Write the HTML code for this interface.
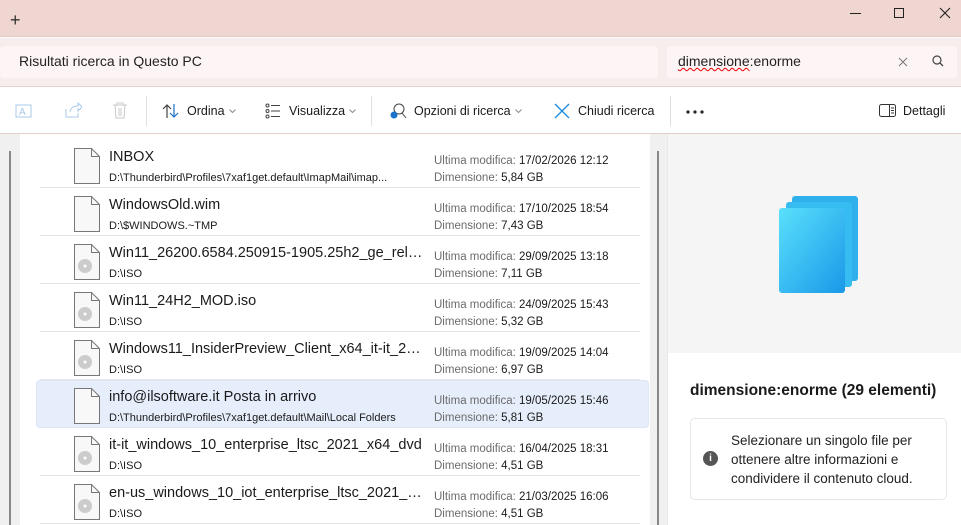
<!DOCTYPE html><html><head><meta charset="utf-8"><style>
*{margin:0;padding:0;box-sizing:border-box}
body{width:961px;height:525px;overflow:hidden;background:#fff;font-family:"Segoe UI","Liberation Sans",sans-serif;color:#1a1a1a;position:relative}
.a{position:absolute}
.row{position:absolute;left:40px;width:600px;height:48px;border-bottom:1px solid #e5e5e5}
.row .n{position:absolute;left:69px;top:9px;font-size:14.5px;white-space:nowrap;width:314px;overflow:hidden;text-overflow:ellipsis}
.row .p{position:absolute;left:69px;top:32px;font-size:11px;white-space:nowrap;width:314px;overflow:hidden;text-overflow:ellipsis}
.row .l1,.row .l2{position:absolute;left:394px;font-size:11.5px;color:#6b6b6b;white-space:nowrap}
.row .l1{top:15px}.row .l2{top:32px}
.row .l1 b,.row .l2 b{font-weight:normal;color:#1a1a1a}
.row svg{position:absolute;left:34px;top:8px}
.tb{position:absolute;top:104px;font-size:12.5px}
.ch{display:inline-block;margin-left:4px;vertical-align:middle}
</style></head><body>
<div class="a" style="left:0;top:0;width:961px;height:37px;background:#f0d6d0;border-bottom:1px solid #e4c8c2"></div>
<div class="a" style="left:10px;top:10px;font-size:18px;color:#333">+</div>
<div class="a" style="left:850px;top:13px;width:11px;height:1px;background:#222"></div>
<div class="a" style="left:894px;top:8px;width:10px;height:10px;border:1px solid #222"></div>
<svg class="a" style="left:939px;top:7px" width="12" height="12"><path d="M1 1l10 10M11 1L1 11" stroke="#222" stroke-width="1.1"/></svg>
<div class="a" style="left:0;top:38px;width:961px;height:49px;background:#f7eded;border-bottom:1px solid #e6d2cd"></div>
<div class="a" style="left:0;top:46px;width:658px;height:32px;background:#fdf5f5;border-radius:4px"></div>
<div class="a" style="left:19px;top:53px;font-size:14px;color:#222">Risultati ricerca in Questo PC</div>
<div class="a" style="left:667px;top:46px;width:290px;height:32px;background:#fdf5f5;border-radius:4px"></div>
<div class="a" style="left:678px;top:53px;font-size:14px;color:#222"><span style="text-decoration:underline wavy #e00;text-decoration-thickness:1px">dimensione</span>:enorme</div>
<svg class="a" style="left:898px;top:57px" width="10" height="10"><path d="M1 1l8 8M9 1L1 9" stroke="#777" stroke-width="1"/></svg>
<svg class="a" style="left:932px;top:55px" width="12" height="12"><circle cx="5" cy="5" r="4" fill="none" stroke="#444" stroke-width="1.2"/><path d="M8 8l3 3" stroke="#444" stroke-width="1.3"/></svg>
<!-- toolbar -->
<svg class="a" style="left:15px;top:101px" width="20" height="20"><rect x="1" y="4" width="15" height="12" fill="none" stroke="#a8c8e8"/><text x="4" y="14" font-size="10" fill="#a8c8e8" font-family="Liberation Sans">A</text></svg>
<svg class="a" style="left:64px;top:101px" width="18" height="18"><path d="M2 8v8h12v-4M6 11c1-5 4-6 8-6V2l4 4-4 4V7" fill="none" stroke="#a8c8e8"/></svg>
<svg class="a" style="left:112px;top:101px" width="16" height="18"><path d="M1 4h14M5 4V2h6v2M3 4l1 13h8l1-13M7 7v8M9 7v8" fill="none" stroke="#c8c8c8"/></svg>
<div class="a" style="left:146px;top:96px;width:1px;height:30px;background:#e0e0e0"></div>
<svg class="a" style="left:162px;top:103px" width="18" height="16"><path d="M5 15V2M1 6l4-4 4 4" fill="none" stroke="#444" stroke-width="1.2"/><path d="M12 1v13M8 10l4 4 4-4" fill="none" stroke="#1a73c8" stroke-width="1.2"/></svg>
<div class="tb" style="left:187px">Ordina<svg class="ch" width="7" height="5"><path d="M0.5 0.5l3 3 3-3" fill="none" stroke="#888"/></svg></div>
<svg class="a" style="left:265px;top:103px" width="16" height="16"><g fill="none" stroke="#444"><circle cx="2.5" cy="2.5" r="1.5"/><circle cx="2.5" cy="8" r="1.5"/><circle cx="2.5" cy="13.5" r="1.5"/><path d="M6 2.5h9M6 8h9M6 13.5h9"/></g></svg>
<div class="tb" style="left:289px">Visualizza<svg class="ch" width="7" height="5"><path d="M0.5 0.5l3 3 3-3" fill="none" stroke="#888"/></svg></div>
<div class="a" style="left:371px;top:96px;width:1px;height:30px;background:#e0e0e0"></div>
<svg class="a" style="left:389px;top:102px" width="18" height="18"><circle cx="10" cy="7" r="5" fill="none" stroke="#444"/><path d="M13 11l4 5" stroke="#444"/><circle cx="5" cy="13" r="3.5" fill="#1a73c8"/></svg>
<div class="tb" style="left:414px">Opzioni di ricerca<svg class="ch" width="7" height="5"><path d="M0.5 0.5l3 3 3-3" fill="none" stroke="#888"/></svg></div>
<svg class="a" style="left:554px;top:103px" width="16" height="16"><path d="M1 1l14 14M15 1L1 15" stroke="#1a8ae0" stroke-width="1.3"/></svg>
<div class="tb" style="left:578px">Chiudi ricerca</div>
<div class="a" style="left:670px;top:96px;width:1px;height:30px;background:#e0e0e0"></div>
<svg class="a" style="left:686px;top:110px" width="20" height="4"><circle cx="2" cy="2" r="1.6" fill="#222"/><circle cx="9" cy="2" r="1.6" fill="#222"/><circle cx="16" cy="2" r="1.6" fill="#222"/></svg>
<svg class="a" style="left:879px;top:104px" width="17" height="13"><rect x="0.5" y="0.5" width="16" height="12" rx="2" fill="none" stroke="#333"/><path d="M10.5 1v11M12 4h3M12 6.5h3M12 9h3" stroke="#333"/></svg>
<div class="tb" style="left:903px">Dettagli</div>
<div class="a" style="left:0;top:133px;width:961px;height:1px;background:#e4d0cb"></div>
<!-- list -->
<div class="a" style="left:0;top:134px;width:20px;height:391px;background:#f0f0f0"></div>
<div class="a" style="left:9px;top:151px;width:2px;height:374px;background:#888"></div>
<div class="a" style="left:650px;top:134px;width:17px;height:391px;background:#f0f0f0"></div>
<div class="a" style="left:657px;top:151px;width:2px;height:374px;background:#888"></div>
<div class="a" style="left:667px;top:134px;width:1px;height:391px;background:#e8e8e8"></div>
<!-- right panel -->
<div class="a" style="left:668px;top:134px;width:293px;height:219px;background:#f5f5f5"></div>
<svg class="a" style="left:778px;top:194px" width="82" height="100"><defs><linearGradient id="g" x1="0" y1="0" x2="1" y2="1"><stop offset="0" stop-color="#5ae0fc"/><stop offset="1" stop-color="#1a98e8"/></linearGradient></defs><rect x="14" y="2" width="66" height="85" rx="3" fill="#2fb0ec"/><rect x="8" y="8" width="66" height="85" rx="3" fill="#36bcf0"/><rect x="1" y="14" width="66" height="85" rx="3" fill="url(#g)"/></svg>
<div class="a" style="left:690px;top:382px;font-size:15.5px;font-weight:bold;color:#1a1a1a">dimensione:enorme (29 elementi)</div>
<div class="a" style="left:690px;top:418px;width:257px;height:82px;border:1px solid #e6e6e6;border-radius:5px"></div>
<div class="a" style="left:703px;top:451px;width:15px;height:15px;border-radius:50%;background:#555;color:#fff;font-size:10px;text-align:center;line-height:15px;font-weight:bold">i</div>
<div class="a" style="left:731px;top:431px;font-size:13.5px;line-height:19px;color:#222">Selezionare un singolo file per<br>ottenere altre informazioni e<br>condividere il contenuto cloud.</div>
<div style="position:absolute;left:0;top:0">
<div class="row" style="top:140px"><svg width="26" height="36"><path d="M0.5 0.5h17l8 8v27h-25z" fill="#f8f8f8" stroke="#777"/><path d="M17.5 0.5v8h8" fill="none" stroke="#777"/></svg><div class="n">INBOX</div><div class="p">D:\Thunderbird\Profiles\7xaf1get.default\ImapMail\imap...</div><div class="l1">Ultima modifica: <b>17/02/2026 12:12</b></div><div class="l2">Dimensione: <b>5,84 GB</b></div></div>
<div class="row" style="top:188px"><svg width="26" height="36"><path d="M0.5 0.5h17l8 8v27h-25z" fill="#f8f8f8" stroke="#777"/><path d="M17.5 0.5v8h8" fill="none" stroke="#777"/></svg><div class="n">WindowsOld.wim</div><div class="p">D:\$WINDOWS.~TMP</div><div class="l1">Ultima modifica: <b>17/10/2025 18:54</b></div><div class="l2">Dimensione: <b>7,43 GB</b></div></div>
<div class="row" style="top:236px"><svg width="26" height="36"><path d="M0.5 0.5h17l8 8v27h-25z" fill="#f8f8f8" stroke="#777"/><path d="M17.5 0.5v8h8" fill="none" stroke="#777"/><circle cx="11" cy="22" r="7" fill="#ccc"/><circle cx="11" cy="22" r="1.5" fill="#fff"/></svg><div class="n">Win11_26200.6584.250915-1905.25h2_ge_release</div><div class="p">D:\ISO</div><div class="l1">Ultima modifica: <b>29/09/2025 13:18</b></div><div class="l2">Dimensione: <b>7,11 GB</b></div></div>
<div class="row" style="top:284px"><svg width="26" height="36"><path d="M0.5 0.5h17l8 8v27h-25z" fill="#f8f8f8" stroke="#777"/><path d="M17.5 0.5v8h8" fill="none" stroke="#777"/><circle cx="11" cy="22" r="7" fill="#ccc"/><circle cx="11" cy="22" r="1.5" fill="#fff"/></svg><div class="n">Win11_24H2_MOD.iso</div><div class="p">D:\ISO</div><div class="l1">Ultima modifica: <b>24/09/2025 15:43</b></div><div class="l2">Dimensione: <b>5,32 GB</b></div></div>
<div class="row" style="top:332px"><svg width="26" height="36"><path d="M0.5 0.5h17l8 8v27h-25z" fill="#f8f8f8" stroke="#777"/><path d="M17.5 0.5v8h8" fill="none" stroke="#777"/><circle cx="11" cy="22" r="7" fill="#ccc"/><circle cx="11" cy="22" r="1.5" fill="#fff"/></svg><div class="n">Windows11_InsiderPreview_Client_x64_it-it_26100</div><div class="p">D:\ISO</div><div class="l1">Ultima modifica: <b>19/09/2025 14:04</b></div><div class="l2">Dimensione: <b>6,97 GB</b></div></div>
<div class="row" style="top:380px;left:36px;width:613px;background:#e6eefb;border:1px solid #dbe6f6;border-radius:4px"><svg width="26" height="36" style="left:37px;top:7px"><path d="M0.5 0.5h17l8 8v27h-25z" fill="#f8f8f8" stroke="#777"/><path d="M17.5 0.5v8h8" fill="none" stroke="#777"/></svg><div class="n" style="left:72px;top:8px">info@ilsoftware.it Posta in arrivo</div><div class="p" style="left:72px;top:31px">D:\Thunderbird\Profiles\7xaf1get.default\Mail\Local Folders</div><div class="l1" style="left:397px;top:14px">Ultima modifica: <b>19/05/2025 15:46</b></div><div class="l2" style="left:397px;top:31px">Dimensione: <b>5,81 GB</b></div></div>
<div class="row" style="top:428px"><svg width="26" height="36"><path d="M0.5 0.5h17l8 8v27h-25z" fill="#f8f8f8" stroke="#777"/><path d="M17.5 0.5v8h8" fill="none" stroke="#777"/><circle cx="11" cy="22" r="7" fill="#ccc"/><circle cx="11" cy="22" r="1.5" fill="#fff"/></svg><div class="n">it-it_windows_10_enterprise_ltsc_2021_x64_dvd</div><div class="p">D:\ISO</div><div class="l1">Ultima modifica: <b>16/04/2025 18:31</b></div><div class="l2">Dimensione: <b>4,51 GB</b></div></div>
<div class="row" style="top:476px"><svg width="26" height="36"><path d="M0.5 0.5h17l8 8v27h-25z" fill="#f8f8f8" stroke="#777"/><path d="M17.5 0.5v8h8" fill="none" stroke="#777"/><circle cx="11" cy="22" r="7" fill="#ccc"/><circle cx="11" cy="22" r="1.5" fill="#fff"/></svg><div class="n">en-us_windows_10_iot_enterprise_ltsc_2021_x64</div><div class="p">D:\ISO</div><div class="l1">Ultima modifica: <b>21/03/2025 16:06</b></div><div class="l2">Dimensione: <b>4,51 GB</b></div></div>
</div>
</body></html>
